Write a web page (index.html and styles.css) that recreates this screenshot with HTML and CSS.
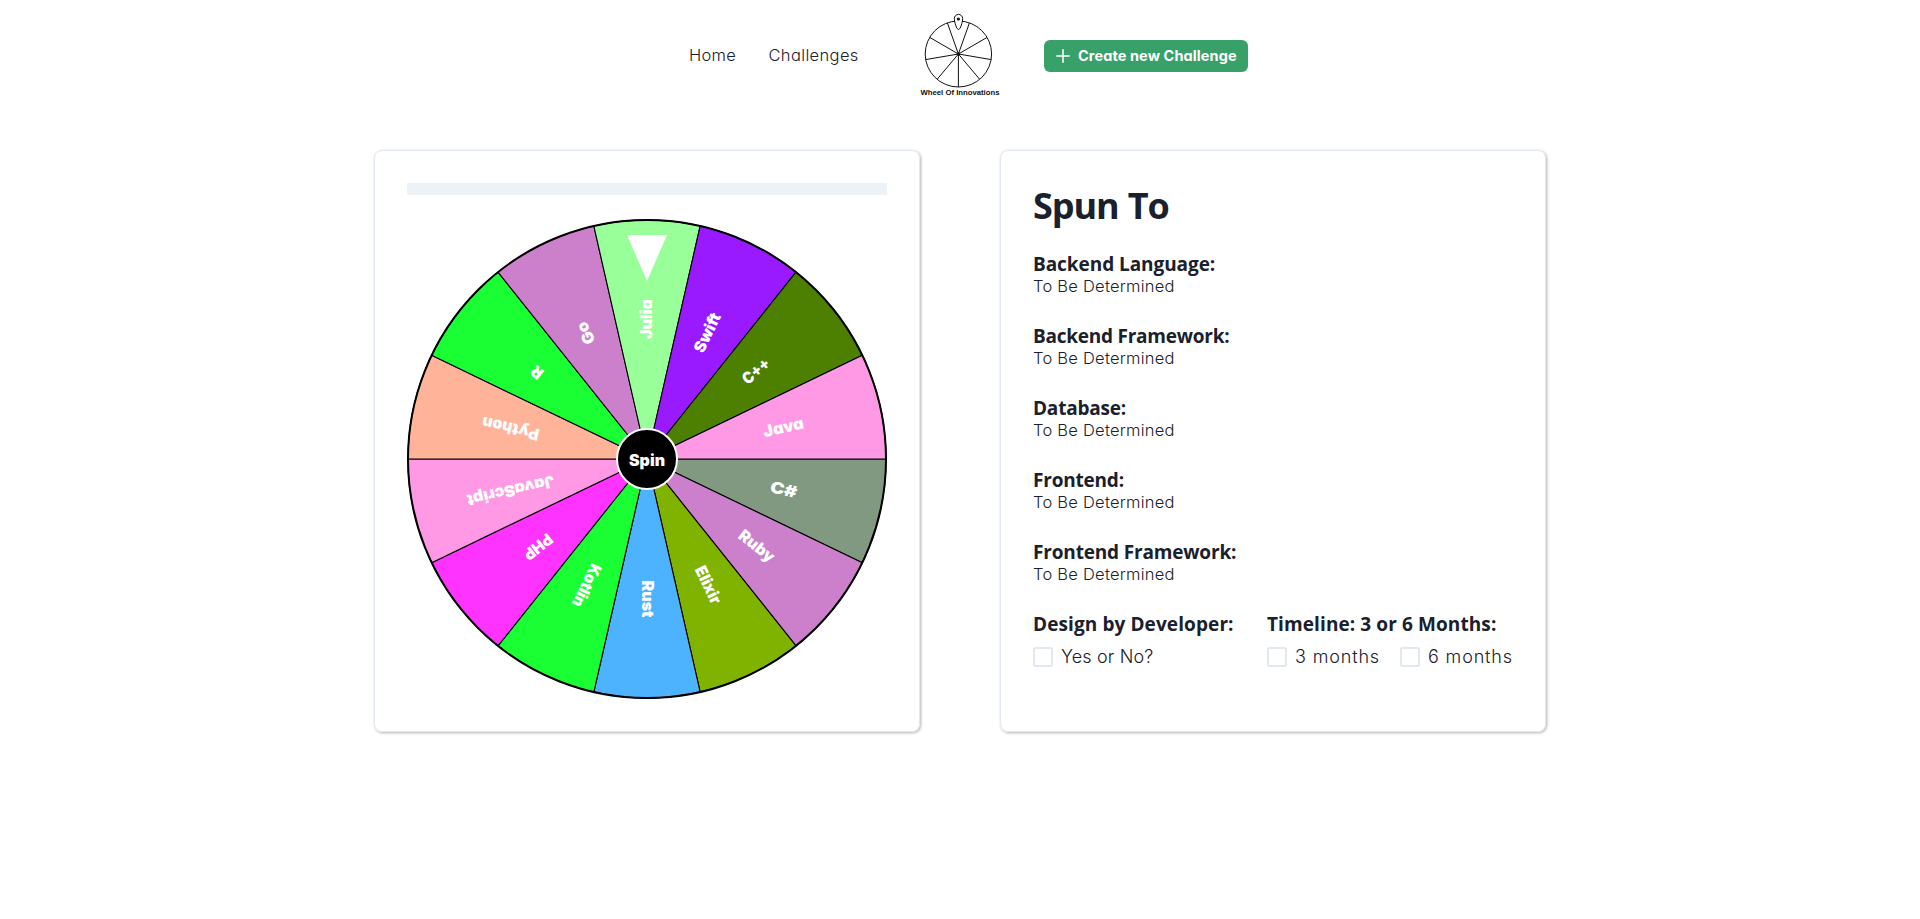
FILE: index.html
```html
<!DOCTYPE html>
<html lang="en">
<head>
<meta charset="utf-8">
<title>Wheel Of Innovations</title>
<link rel="stylesheet" href="styles.css">
</head>
<body>
<header class="nav">
  <nav class="links"><a class="home">Home</a><a class="challenges">Challenges</a></nav>
  <svg class="logo" width="84" height="92" viewBox="916 10 84 92">
    <g fill="none" stroke="#111" stroke-width="1">
      <ellipse cx="958.4" cy="54" rx="33.2" ry="33"/>
      <path d="M958.4 54V87M958.4 54l-21 25M958.4 54l21 25M958.4 54l-32.8 5.6M958.4 54l32.8 5.6M958.4 54l-28.5-16.5M958.4 54l28.5-16.5M958.4 54l-11-31M958.4 54l11-31"/>
      <path fill="#fff" d="M954.3 18.6a4.2 4.2 0 0 1 8.4 0c0 3-1.5 7-2.5 9.600q-1.700 2.800-3.400 0c-1-2.600-2.500-6.600-2.500-9.600z"/>
    </g>
    <circle cx="958.4" cy="19" r="1.600" fill="#111"/>
    <circle cx="958.4" cy="54" r="1.700" fill="#111"/>
    <text class="logo-text" x="920.500" y="95.300" textLength="79" lengthAdjust="spacingAndGlyphs">Wheel Of Innovations</text>
  </svg>
  <button class="create">
    <svg width="14" height="14" viewBox="0 0 14 14"><path d="M7 .8v12.400M.8 7h12.400" stroke="#fff" stroke-width="1.500" stroke-linecap="round"/></svg>
    <span>Create new Challenge</span>
  </button>
</header>
<main class="cards">
  <section class="card">
    <div class="progress"></div>
    <svg class="wheel" width="480" height="480" viewBox="-240 -240 480 480">
      <defs><path id="slice" d="M0 0H239A239 239 0 0 1 215.33 103.7Z"/></defs>
      <g stroke="#000" stroke-width="1.100">
        <use href="#slice" fill="#809980"/>
        <use href="#slice" fill="#cc80cc" transform="rotate(25.714)"/>
        <use href="#slice" fill="#80b300" transform="rotate(51.429)"/>
        <use href="#slice" fill="#4db3ff" transform="rotate(77.143)"/>
        <use href="#slice" fill="#1aff33" transform="rotate(102.857)"/>
        <use href="#slice" fill="#ff33ff" transform="rotate(128.571)"/>
        <use href="#slice" fill="#ff99e6" transform="rotate(154.286)"/>
        <use href="#slice" fill="#ffb399" transform="rotate(180)"/>
        <use href="#slice" fill="#1aff33" transform="rotate(205.714)"/>
        <use href="#slice" fill="#cc80cc" transform="rotate(231.429)"/>
        <use href="#slice" fill="#99ff99" transform="rotate(257.143)"/>
        <use href="#slice" fill="#991aff" transform="rotate(282.857)"/>
        <use href="#slice" fill="#4d8000" transform="rotate(308.571)"/>
        <use href="#slice" fill="#ff99e6" transform="rotate(334.286)"/>
      </g>
      <circle r="239" fill="none" stroke="#000" stroke-width="2"/>
      <g class="labels">
        <text x="140" y="5" transform="rotate(12.857)" textLength="27" lengthAdjust="spacingAndGlyphs">C#</text>
        <text x="140" y="5" transform="rotate(38.571)" textLength="41" lengthAdjust="spacingAndGlyphs">Ruby</text>
        <text x="140" y="5" transform="rotate(64.286)" textLength="40" lengthAdjust="spacingAndGlyphs">Elixir</text>
        <text x="140" y="5" transform="rotate(90)" textLength="37" lengthAdjust="spacingAndGlyphs">Rust</text>
        <text x="140" y="5" transform="rotate(115.714)" textLength="46" lengthAdjust="spacingAndGlyphs">Kotlin</text>
        <text x="140" y="5" transform="rotate(141.429)" textLength="32" lengthAdjust="spacingAndGlyphs">PHP</text>
        <text x="140" y="5" transform="rotate(167.143)" textLength="89" lengthAdjust="spacingAndGlyphs">JavaScript</text>
        <text x="140" y="5" transform="rotate(192.857)" textLength="58" lengthAdjust="spacingAndGlyphs">Python</text>
        <text x="140" y="5" transform="rotate(218.571)">R</text>
        <text x="140" y="5" transform="rotate(244.286)" textLength="23" lengthAdjust="spacingAndGlyphs">Go</text>
        <text x="140" y="5" transform="rotate(270)" textLength="40" lengthAdjust="spacingAndGlyphs">Julia</text>
        <text x="140" y="5" transform="rotate(295.714)" textLength="42" lengthAdjust="spacingAndGlyphs">Swift</text>
        <text x="140" y="5" transform="rotate(321.429)" textLength="31" lengthAdjust="spacingAndGlyphs">C++</text>
        <text x="140" y="5" transform="rotate(347.143)" textLength="41" lengthAdjust="spacingAndGlyphs">Java</text>
      </g>
      <path d="M-20-224H20L0-178Z" fill="#fff"/>
      <circle r="30" fill="#000" stroke="#fff" stroke-width="2"/>
      <text class="spin" x="0" y="6.500" textLength="36" lengthAdjust="spacingAndGlyphs">Spin</text>
    </svg>
  </section>
  <section class="card result">
    <h2>Spun To</h2>
    <div class="item"><h3 class="k1">Backend Language:</h3><p>To Be Determined</p></div>
    <div class="item"><h3 class="k2">Backend Framework:</h3><p>To Be Determined</p></div>
    <div class="item"><h3 class="k3">Database:</h3><p>To Be Determined</p></div>
    <div class="item"><h3 class="k4">Frontend:</h3><p>To Be Determined</p></div>
    <div class="item"><h3 class="k5">Frontend Framework:</h3><p>To Be Determined</p></div>
    <div class="options">
      <div class="option design"><h3 class="k6">Design by Developer:</h3>
        <div class="checks"><label><i></i><span>Yes or No?</span></label></div></div>
      <div class="option"><h3 class="k7">Timeline: 3 or 6 Months:</h3>
        <div class="checks months"><label><i></i><span>3 months</span></label><label><i></i><span>6 months</span></label></div></div>
    </div>
  </section>
</main>
</body>
</html>
```
FILE: styles.css
```css
* { box-sizing: border-box; margin: 0; padding: 0; }
body { min-height: 919px; background: #fff; color: #1a202c; font-family: Inter, "Open Sans", sans-serif; font-feature-settings: "cv11"; font-size: 16px; }
.nav { display: flex; height: 150px; padding: 10px 0 0 689px; align-items: flex-start; }
.links { display: flex; width: 227px; padding-top: 33px; line-height: 24px; font-size: 16.5px; font-weight: 350; white-space: nowrap; }
.home { width: 79.5px; letter-spacing: .3px; }
.challenges { letter-spacing: .35px; }
.logo { display: block; flex: none; }
.logo-text { font: bold 7.500px "Liberation Sans", Arial, sans-serif; fill: #111; }
.create { display: flex; align-items: center; gap: 8px; width: 204px; height: 32px; margin: 30px 0 0 44px; padding: 0 12px; border: 0; border-radius: 6px; background: #38a169; color: #fff; font: 700 14.5px/21px Inter, "Open Sans", sans-serif; font-feature-settings: "cv11"; letter-spacing: .1px; white-space: nowrap; }
.create svg { flex: none; }
.create span { margin-top: -1px; }
.cards { display: flex; justify-content: center; gap: 80px; }
.card { width: 546px; height: 582px; padding: 32px; border: 1px solid #e2e8f0; border-radius: 8px; box-shadow: 1px 1px 3px rgba(0,0,0,.3); }
.progress { height: 12px; margin-bottom: 24px; background: #edf2f7; }
.wheel { display: block; }
.labels, .spin { font-weight: 900; font-size: 16px; fill: #fff; text-anchor: middle; }
h2, h3 { font-family: "Open Sans", "Noto Sans", sans-serif; white-space: nowrap; }
h2 { font-size: 36px; line-height: 43px; font-weight: 700; letter-spacing: -1.1px; word-spacing: 1px; padding-top: 1px; margin-bottom: 25px; }
h3 { font-size: 19px; line-height: 24px; font-weight: 700; }
.k1 { letter-spacing: -.06px; }
.k2 { letter-spacing: -.24px; }
.k3, .k4 { letter-spacing: -.2px; }
.k5 { letter-spacing: -.17px; }
.k6, .k7 { letter-spacing: .1px; }
.item { height: 72px; }
.item p { line-height: 21px; font-size: 16.5px; font-weight: 350; letter-spacing: .24px; }
.options { display: flex; }
.option { flex: none; }
.design { width: 234px; }
.checks { display: flex; gap: 20px; margin-top: 7px; }
.checks label { display: flex; align-items: center; gap: 8px; height: 27px; font-size: 18px; font-weight: 350; letter-spacing: .15px; white-space: nowrap; }
.months label { font-size: 18px; letter-spacing: .85px; }
.checks i { flex: none; width: 20px; height: 20px; border: 2px solid #e2e8f0; border-radius: 2px; }
```
